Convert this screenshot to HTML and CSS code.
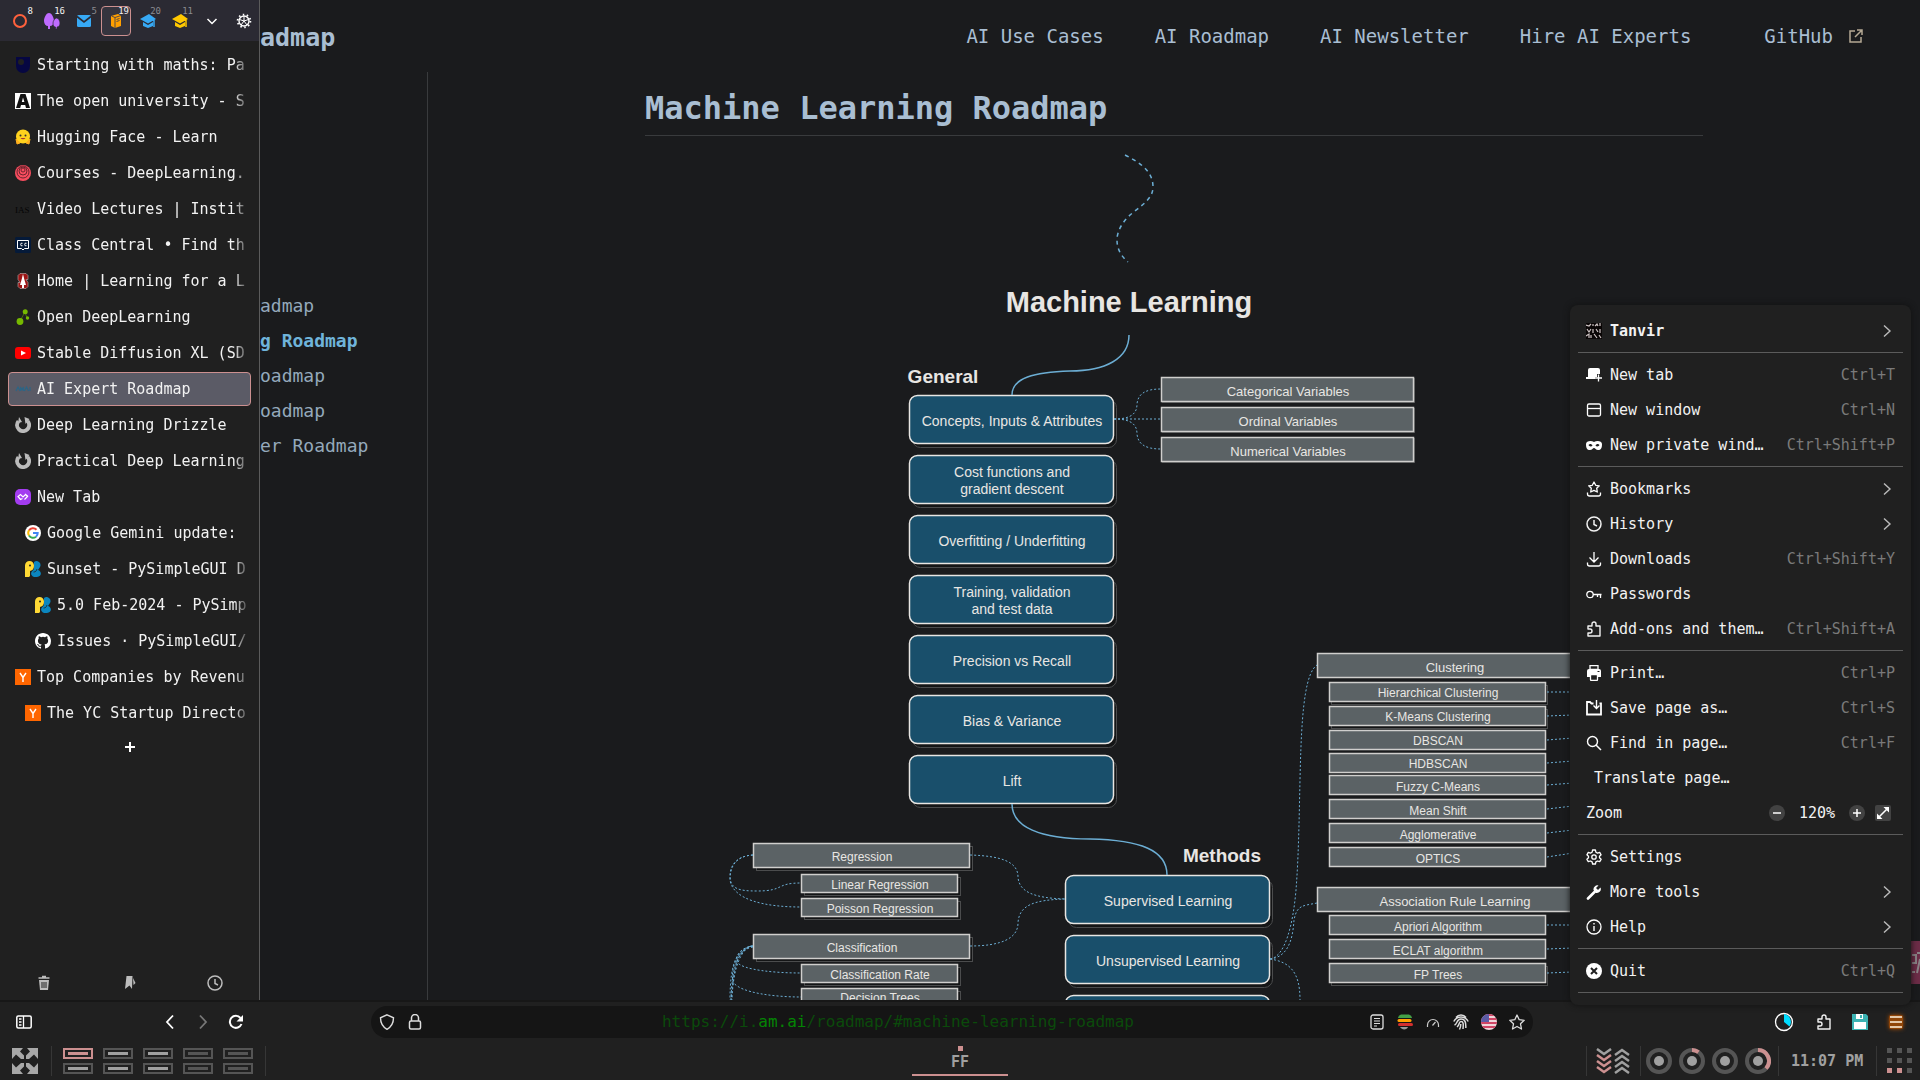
FILE: index.html
```html
<!DOCTYPE html>
<html lang="en">
<head>
<meta charset="utf-8">
<title>AI Expert Roadmap</title>
<link rel="stylesheet" href="styles.css">
</head>
<body>
<svg class="defs" aria-hidden="true">
  <symbol id="chev-r" viewBox="0 0 16 16"><path d="M5 2.500l6 5.500-6 5.500" fill="none" stroke="currentColor" stroke-width="1.400"/></symbol>
  <symbol id="loader" viewBox="0 0 16 16"><path d="M3.500 4.200A6 6 0 1 0 12.500 4" fill="none" stroke="#bbb" stroke-width="4"/><path d="M9.500 0l5 2-4 5z" fill="#bbb"/><path d="M4 0l3 5-4 1zM8 5v4" fill="#bbb"/></symbol>
  <symbol id="pysg" viewBox="0 0 16 16"><path d="M9 1a4 4 0 0 1 6 5l-2 3c4 1 4 7-1 7H9a3.500 3.500 0 0 1-2.500-5L9 8z" fill="#0b86bf"/><path d="M0 16V4.500C0 2 2 0 4.500 0S9 2 9 4.500c0 3-1 5-4 5.500v5l-1 1z" fill="#ffd935"/><circle cx="5" cy="4.500" r="1" fill="#222"/><path d="M8.500 11c2 0 3-1 3.500-3" stroke="#222" fill="none" stroke-width=".8"/></symbol>
  <symbol id="yc" viewBox="0 0 16 16"><path d="M0 0h16v16H0z" fill="#f60"/><path d="M5 4l3 4.500L11 4M8 8.500V13" fill="none" stroke="#fff" stroke-width="1.400"/></symbol>
  <symbol id="gradcap" viewBox="0 0 16 16"><path d="M0 6l9-5 7 5-8 4.500z" fill="currentColor"/><path d="M3 9l5 3 5-3v4l-5 2-5-2z" fill="currentColor"/><path d="M9 6l5 1.500V14" fill="none" stroke="currentColor" stroke-width="1.500"/></symbol>
  <symbol id="puzzle" viewBox="0 0 16 16"><path d="M2 5h4V3a2 2 0 0 1 4 0v2h4v10H2v-3h2a1.600 1.600 0 0 0 0-4H2z" fill="none" stroke="currentColor" stroke-width="1.400" stroke-linejoin="round"/></symbol>
  <symbol id="clock" viewBox="0 0 16 16"><circle cx="8" cy="8" r="7" fill="none" stroke="currentColor" stroke-width="1.500"/><path d="M8 4v4.500l3 1.500" fill="none" stroke="currentColor" stroke-width="1.500"/></symbol>
</svg>

<div class="window">
  <aside class="tabs">
    <div class="groups">
      <button class="group" aria-label="Group 1"><svg viewBox="0 0 16 16"><circle cx="8" cy="8" r="6" fill="none" stroke="#ff613d" stroke-width="2"/></svg><span>8</span></button>
      <button class="group" aria-label="Group 2"><svg viewBox="0 0 16 16"><path d="M5 0c3 0 5 5 5 8s-2 5-4 5v3H4v-3c-2 0-4-2-4-5s2-8 5-8z" fill="#bf6bff"/><path d="M12.500 5c2 0 3.500 3 3.500 5s-1 4-3 4v2h-1.500v-2c-2 0-2.500-2-2.500-4s2-5 3.500-5z" fill="#bf6bff" stroke="#2b2a33" stroke-width=".7"/></svg><span>16</span></button>
      <button class="group dim" aria-label="Group 3"><svg viewBox="0 0 16 16"><rect x="1" y="2" width="14" height="12" rx="1.500" fill="#37a9f5"/><path d="M1 3.500l7 5.500 7-5.500" fill="none" stroke="#2b2a33" stroke-width="1.600"/></svg><span>5</span></button>
      <button class="group on" aria-label="Group 4"><svg viewBox="0 0 16 16"><path d="M3 3l7-2 3 1.500V13l-6 2-4-2z" fill="#ff9f00"/><path d="M3.500 3L7 4.500V15M7 4.500l6-2M8.500 6.500l3-1M8.500 8.500l3-1" stroke="#42414d" stroke-width=".9" fill="none"/></svg><span>19</span></button>
      <button class="group dim blue" aria-label="Group 5"><svg><use href="#gradcap"/></svg><span>20</span></button>
      <button class="group dim gold" aria-label="Group 6"><svg><use href="#gradcap"/></svg><span>11</span></button>
      <button class="group" aria-label="More groups"><svg viewBox="0 0 16 16"><path d="M3.500 6L8 10.500 12.500 6" fill="none" stroke="#fff" stroke-width="1.500"/></svg></button>
      <button class="group" aria-label="Group settings"><svg viewBox="0 0 16 16"><circle cx="8" cy="8" r="5" fill="none" stroke="#fff" stroke-width="1.400"/><circle cx="8" cy="8" r="6.400" fill="none" stroke="#fff" stroke-width="1.800" stroke-dasharray="1.500 2.520"/><path d="M8 8V3M8 8l4.500-1.500M8 8l3 4M8 8l-3 4M8 8L3.500 6.500" stroke="#fff"/></svg></button>
    </div>
    <ul class="tablist">
      <li><a class="tab" href="#"><svg viewBox="0 0 16 16"><path d="M1 0h14v9a7 7 0 0 1-14 0z" fill="#060742"/><circle cx="6" cy="5" r="3" fill="#202020"/></svg><span>Starting with maths: Pa</span></a></li>
      <li><a class="tab" href="#"><svg viewBox="0 0 16 16"><path d="M0 0h16v16H0z" fill="#fff"/><path d="M5.500 1h5L15 15h-4l-.8-3H6l-.8 3H1zM8 4.500L6.800 9h2.600z" fill="#111"/></svg><span>The open university - S</span></a></li>
      <li><a class="tab" href="#"><svg viewBox="0 0 16 16"><circle cx="8" cy="7.500" r="7" fill="#ffd21e"/><path d="M1 10l4 4-3 1zM15 10l-4 4 3 1z" fill="#ffb01e" stroke="#ffb01e"/><circle cx="5.500" cy="6.500" r="1" fill="#333"/><circle cx="10.500" cy="6.500" r="1" fill="#333"/><path d="M5.500 9a3 3 0 0 0 5 0z" fill="#a33"/></svg><span>Hugging Face - Learn</span></a></li>
      <li><a class="tab" href="#"><svg viewBox="0 0 16 16"><circle cx="8" cy="8" r="8" fill="#f94d5f"/><g fill="none" stroke="#5c2029" stroke-width=".9"><circle cx="8" cy="7" r="6"/><circle cx="8" cy="6" r="4"/><circle cx="8" cy="5" r="2"/></g></svg><span>Courses - DeepLearning.</span></a></li>
      <li><a class="tab" href="#"><svg viewBox="0 0 16 16"><text x="0" y="12" class="ias">IAS</text></svg><span>Video Lectures | Instit</span></a></li>
      <li><a class="tab" href="#"><svg viewBox="0 0 16 16"><rect width="16" height="16" rx="1.500" fill="#051a39"/><path d="M2.500 3.500h11v8h-4l-1.500 1.500-1.500-1.500h-4z" fill="none" stroke="#fff"/><path d="M7.500 6.300a1.300 1.300 0 1 0 0 2.400M11.500 6.300a1.300 1.300 0 1 0 0 2.400" fill="none" stroke="#fff"/></svg><span>Class Central • Find th</span></a></li>
      <li><a class="tab" href="#"><svg viewBox="0 0 16 16"><path d="M5 .5h6l2 2v4h-2l2 3v4l-2 2H5l-2-2v-4h2l-2-3v-4z" fill="#9c1616" stroke="#ccc" stroke-width=".5"/><path d="M8 1l1.500 6 1.500 5H9v3H7v-3H5l1.500-5z" fill="#fff"/></svg><span>Home | Learning for a L</span></a></li>
      <li><a class="tab" href="#"><svg viewBox="0 0 16 16"><path d="M5 12l5-9 2 6" stroke="#537f0a" stroke-width=".8" fill="none"/><g fill="#76b900"><circle cx="5" cy="12.500" r="3.400"/><circle cx="10.200" cy="2.800" r="2.500"/><circle cx="12.500" cy="9" r="1.700"/></g></svg><span>Open DeepLearning</span></a></li>
      <li><a class="tab" href="#"><svg viewBox="0 0 16 16"><rect y="2" width="16" height="12" rx="3" fill="red"/><path d="M6 5.500l5 2.500-5 2.500z" fill="#fff"/></svg><span>Stable Diffusion XL (SD</span></a></li>
      <li><a class="tab current" href="#"><svg viewBox="0 0 16 16"><path d="M1 10l2-4 2 4M5.500 10V6l1.500 3L8.500 6v4M9.500 10l2-4 2 4M15 6v4" fill="none" stroke="#2d6585" stroke-width="1.200"/></svg><span>AI Expert Roadmap</span></a></li>
      <li><a class="tab" href="#"><svg><use href="#loader"/></svg><span>Deep Learning Drizzle</span></a></li>
      <li><a class="tab" href="#"><svg><use href="#loader"/></svg><span>Practical Deep Learning</span></a></li>
      <li><a class="tab" href="#"><svg viewBox="0 0 16 16"><rect width="16" height="16" rx="5" fill="#a33cf0"/><path d="M7.500 9.500l-2 1-2.500-3 2.500-2L8 8l2.500-2.500 2 2-3 3M10 5l3 2.500" fill="none" stroke="#fff" stroke-width="1.200"/></svg><span>New Tab</span></a></li>
      <li class="child"><a class="tab" href="#"><svg viewBox="0 0 16 16"><circle cx="8" cy="8" r="8" fill="#fff"/><g fill="none" stroke-width="2"><path d="M4 5.500A4.700 4.700 0 0 1 11.500 4.700" stroke="#ea4335"/><path d="M4 5.300a5 5 0 0 0 0 5.200" stroke="#fbbc05"/><path d="M4 10.500a4.700 4.700 0 0 0 7 1.200" stroke="#34a853"/><path d="M8 8h4.700a4.700 4.700 0 0 1-1.700 3.700" stroke="#4285f4"/></g></svg><span>Google Gemini update:</span></a></li>
      <li class="child"><a class="tab" href="#"><svg><use href="#pysg"/></svg><span>Sunset - PySimpleGUI D</span></a></li>
      <li class="grandchild"><a class="tab" href="#"><svg><use href="#pysg"/></svg><span>5.0 Feb-2024 - PySimp</span></a></li>
      <li class="grandchild"><a class="tab" href="#"><svg viewBox="0 0 16 16"><path fill="#fff" d="M8 0C3.580 0 0 3.580 0 8c0 3.540 2.290 6.530 5.470 7.590.4.070.55-.17.55-.38v-1.490c-2.010.37-2.530-.49-2.690-.94-.09-.23-.48-.94-.82-1.130-.28-.15-.68-.52-.01-.53.63-.01 1.080.58 1.230.82.72 1.210 1.870.87 2.330.66.07-.52.28-.87.51-1.070-1.780-.2-3.640-.89-3.640-3.950 0-.87.31-1.590.82-2.150-.08-.2-.36-1.020.08-2.120 0 0 .67-.21 2.200.82a7.600 7.600 0 0 1 4 0c1.530-1.040 2.200-.82 2.200-.82.44 1.100.16 1.920.08 2.120.51.56.82 1.270.82 2.150 0 3.070-1.870 3.750-3.650 3.950.29.25.54.73.54 1.480v2.200c0 .21.15.46.55.38A8 8 0 0 0 16 8c0-4.420-3.580-8-8-8z"/></svg><span>Issues · PySimpleGUI/</span></a></li>
      <li><a class="tab" href="#"><svg><use href="#yc"/></svg><span>Top Companies by Revenu</span></a></li>
      <li class="child"><a class="tab" href="#"><svg><use href="#yc"/></svg><span>The YC Startup Directo</span></a></li>
    </ul>
    <button class="addtab" aria-label="New tab"><svg viewBox="0 0 16 16"><path d="M8 3v10M3 8h10" stroke="#fff" stroke-width="2"/></svg></button>
    <div class="tabfoot">
      <button aria-label="Trash"><svg viewBox="0 0 16 16"><path d="M2.500 3h11M6 1.500h4" stroke="currentColor" stroke-width="1.500"/><path d="M3 5h10l-1 10H4z" fill="currentColor"/><path d="M6 7v6M8 7v6M10 7v6" stroke="#202020"/></svg></button>
      <button aria-label="Bookmarks"><svg viewBox="0 0 16 16"><path d="M5.500 1h6L11 14l-2.500-3.500L4 14z" fill="currentColor"/><path d="M12 3l2.500 5-2 2z" fill="currentColor"/></svg></button>
      <button aria-label="History"><svg><use href="#clock"/></svg></button>
    </div>
  </aside>

  <div class="site">
    <header class="sitehead">
      <a class="brand" href="#">admap</a>
      <nav class="sitenav">
        <a href="#">AI Use Cases</a>
        <a href="#">AI Roadmap</a>
        <a href="#">AI Newsletter</a>
        <a href="#">Hire AI Experts</a>
        <a class="github" href="#">GitHub <svg viewBox="0 0 14 14"><path d="M6 2H1v11h11V8" fill="none" stroke="#b5a994" stroke-width="1.500"/><path d="M8 1h5v5M13 1L6 8" fill="none" stroke="#b5a994" stroke-width="1.500"/></svg></a>
      </nav>
    </header>
    <div class="sitebody">
      <nav class="toc">
        <a href="#">admap</a>
        <a class="here" href="#">g Roadmap</a>
        <a href="#">oadmap</a>
        <a href="#">oadmap</a>
        <a href="#">er Roadmap</a>
      </nav>
      <main class="article">
        <h1>Machine Learning Roadmap</h1>
        <svg class="map" width="1058" height="864" viewBox="645 136 1058 864">
          <defs>
            <g id="topic"><rect class="sh" x="3" y="4" width="204" height="48" rx="8"/><rect class="nd" width="204" height="48" rx="8"/></g>
            <g id="var"><rect class="sh" x="1" y="1" width="252" height="24"/><rect class="gr" width="252" height="24"/></g>
            <g id="fam"><rect class="sh" x="3" y="3" width="216" height="24"/><rect class="gr" width="216" height="24"/></g>
            <g id="leaf"><rect class="sh" x="3" y="3" width="156" height="18"/><rect class="gr" width="156" height="18"/></g>
            <g id="algo"><rect class="gr" width="216" height="19"/></g>
            <g id="algosh"><rect class="sh" x="2" y="3" width="216" height="19"/><rect class="gr" width="216" height="19"/></g>
          </defs>
          <g>
            <use href="#topic" x="909.500" y="395.500"/><use href="#topic" x="909.500" y="455.500"/><use href="#topic" x="909.500" y="515.500"/><use href="#topic" x="909.500" y="575.500"/><use href="#topic" x="909.500" y="635.500"/><use href="#topic" x="909.500" y="695.500"/><use href="#topic" x="909.500" y="755.500"/>
            <use href="#topic" x="1065.500" y="875.500"/><use href="#topic" x="1065.500" y="935.500"/><use href="#topic" x="1065.500" y="995.500"/>
            <use href="#var" x="1161.500" y="377.500"/><use href="#var" x="1161.500" y="407.500"/><use href="#var" x="1161.500" y="437.500"/>
            <use href="#fam" x="753.500" y="843.500"/><use href="#fam" x="753.500" y="934.500"/>
            <use href="#leaf" x="801.500" y="874.500"/><use href="#leaf" x="801.500" y="898.500"/><use href="#leaf" x="801.500" y="964.500"/><use href="#leaf" x="801.500" y="988.500"/>
            <rect class="gr" x="1317.500" y="653.500" width="276" height="24"/><rect class="gr" x="1317.500" y="887.500" width="276" height="24"/>
            <use href="#algosh" x="1329.500" y="682.500"/><use href="#algosh" x="1329.500" y="706.500"/><use href="#algo" x="1329.500" y="730.500"/><use href="#algo" x="1329.500" y="753.500"/><use href="#algo" x="1329.500" y="775.500"/><use href="#algo" x="1329.500" y="799.500"/><use href="#algo" x="1329.500" y="823.500"/><use href="#algo" x="1329.500" y="847.500"/>
            <use href="#algo" x="1329.500" y="915.500"/><use href="#algo" x="1329.500" y="939.500"/><use href="#algosh" x="1329.500" y="963.500"/>
          </g>
          <g class="line">
            <path class="dash" d="M1125 155C1145 165 1153 174 1153 187C1153 197 1145 203 1135 211C1124 219 1117 230 1117 240C1117 249 1121 256 1128 262"/>
            <path d="M1129 335C1129 359 1105 371 1070 371C1034 372 1012 378 1012 395"/>
            <path d="M1012 804C1012 827 1040 839 1090 839C1140 840 1167 850 1167 875"/>
          </g>
          <g class="line dot">
            <path d="M1114 419H1161M1114 419C1132 419 1137 413 1137 404C1138 394 1145 389 1161 389M1114 419C1132 419 1137 425 1137 434C1138 444 1145 449 1161 449"/>
            <path d="M753 855C736 856 730 866 730 876C730 889 739 891 757 891C785 891 775 883 801 883"/>
            <path d="M753 855C736 856 730 866 730 880C733 900 765 907 801 907"/>
            <path d="M970 855C1002 856 1018 862 1018 877C1019 892 1034 898 1065 899"/>
            <path d="M970 946C1002 946 1018 938 1018 923C1019 905 1034 900 1065 899"/>
            <path d="M753 946C742 947 735 955 737 962C742 970 775 973 801 973M753 946C740 948 730 965 733 982C740 993 775 997 801 997"/>
            <path d="M753 946C738 948 730 960 730 1000M753 947C740 949 732 962 731 1000M752 946C742 948 733 966 732 1000M751 946C738 950 734 964 731 1002"/>
            <path d="M1270 959C1285 957 1293 925 1296 890C1303 800 1295 680 1317 665"/>
            <path d="M1270 959C1290 957 1293 935 1294 920C1297 905 1302 906 1317 903"/>
            <path d="M1270 959C1290 962 1300 972 1300 1000"/>
            <path d="M1547 692h26M1547 716l26-1M1547 740l26-2M1547 763l26-2M1547 785l26-2M1547 809l26-3M1547 833l26-3M1547 857l26-4M1547 925h26M1547 949l26-1M1547 973l26-1"/>
          </g>
          <text class="t-title" x="1129" y="312">Machine Learning</text>
          <text class="t-head" x="943" y="383">General</text>
          <text class="t-head" x="1222" y="862">Methods</text>
          <g class="t-topic">
            <text x="1012" y="426">Concepts, Inputs &amp; Attributes</text>
            <text x="1012" y="477">Cost functions and</text><text x="1012" y="494">gradient descent</text>
            <text x="1012" y="546">Overfitting / Underfitting</text>
            <text x="1012" y="597">Training, validation</text><text x="1012" y="614">and test data</text>
            <text x="1012" y="666">Precision vs Recall</text>
            <text x="1012" y="726">Bias &amp; Variance</text>
            <text x="1012" y="786">Lift</text>
            <text x="1168" y="906">Supervised Learning</text>
            <text x="1168" y="966">Unsupervised Learning</text>
          </g>
          <g class="t-var">
            <text x="1288" y="396">Categorical Variables</text><text x="1288" y="426">Ordinal Variables</text><text x="1288" y="456">Numerical Variables</text>
            <text x="1455" y="672">Clustering</text><text x="1455" y="906">Association Rule Learning</text>
          </g>
          <g class="t-leaf">
            <text x="862" y="861">Regression</text><text x="862" y="952">Classification</text>
            <text x="880" y="889">Linear Regression</text><text x="880" y="913">Poisson Regression</text><text x="880" y="979">Classification Rate</text><text x="880" y="1002">Decision Trees</text>
            <text x="1438" y="697">Hierarchical Clustering</text><text x="1438" y="721">K-Means Clustering</text><text x="1438" y="745">DBSCAN</text><text x="1438" y="768">HDBSCAN</text><text x="1438" y="791">Fuzzy C-Means</text><text x="1438" y="815">Mean Shift</text><text x="1438" y="839">Agglomerative</text><text x="1438" y="863">OPTICS</text>
            <text x="1438" y="931">Apriori Algorithm</text><text x="1438" y="955">ECLAT algorithm</text><text x="1438" y="979">FP Trees</text>
          </g>
        </svg>
      </main>
    </div>
    <button class="chat" aria-label="Translate widget"><svg viewBox="0 0 8 43"><path d="M0 14h4v8H0M0 31h3M8 12H5M8 18l-3 14" fill="none" stroke="#8a8286" stroke-width="2"/></svg></button>
  </div>
</div>

<div class="toolbar">
  <div class="navleft">
    <button class="tb" aria-label="Toggle sidebar"><svg viewBox="0 0 16 16"><rect x=".8" y="2" width="14.400" height="12" rx="1.500" fill="none" stroke="#fff" stroke-width="1.500"/><path d="M7.500 2v12M3 5h2.500M3 8h2.500M3 11h2.500" stroke="#fff" stroke-width="1.300"/></svg></button>
    <div class="history">
      <button class="tb" aria-label="Back"><svg viewBox="0 0 16 16"><path d="M11 1.500L5 8l6 6.500" fill="none" stroke="#fff" stroke-width="1.800"/></svg></button>
      <button class="tb" aria-label="Forward"><svg viewBox="0 0 16 16"><path d="M5 1.500L11 8l-6 6.500" fill="none" stroke="#777" stroke-width="1.800"/></svg></button>
      <button class="tb" aria-label="Reload"><svg viewBox="0 0 16 16"><path d="M12.500 4A6 6 0 1 0 13.500 10" fill="none" stroke="#fff" stroke-width="2"/><path d="M15 1v6.500H8.500z" fill="#fff"/></svg></button>
    </div>
  </div>
  <div class="urlbar">
    <svg viewBox="0 0 16 16"><path d="M8 .8l6.500 3c0 5-2 9-6.500 11.500C3.500 12.800 1.500 8.800 1.500 3.800z" fill="none" stroke="#ddd" stroke-width="1.400"/></svg>
    <svg viewBox="0 0 16 16"><rect x="2.500" y="7" width="11" height="8" rx="1.500" fill="none" stroke="#ddd" stroke-width="1.500"/><path d="M4.500 7V4a3.500 3.500 0 0 1 7 0v3" fill="none" stroke="#ddd" stroke-width="1.500"/></svg>
    <a class="url" href="#">https://i.<b>am.ai</b>/roadmap/#machine-learning-roadmap</a>
    <svg viewBox="0 0 16 16"><rect x="2" y="1" width="12" height="14" rx="2" fill="none" stroke="#ddd" stroke-width="1.300"/><path d="M5 4.500h6M5 7h6M5 9.500h6M5 12h3" stroke="#ddd" stroke-width="1.200"/></svg>
    <svg viewBox="0 0 16 16"><path d="M4 .5h8a4 4 0 0 1 3 3.500H1A4 4 0 0 1 4 .5z" fill="#43a047"/><rect x=".5" y="5" width="14" height="3" rx="1.500" fill="#ffa000"/><rect x="1" y="9" width="15" height="3" rx="1.500" fill="#d32f2f"/><path d="M3 13h8c-1 3-6 3.500-8 0z" fill="#999"/></svg>
    <svg viewBox="0 0 16 16"><path d="M2.500 13V11a5.500 5.500 0 0 1 11 0V13M7.500 11.500l3-3.500" fill="none" stroke="#ccc" stroke-width="1.200"/></svg>
    <svg viewBox="0 0 16 16"><path d="M3 3.500c2.500-3.500 7.500-3.500 10 0M.8 7.500C4 1.500 12 1.500 15.200 7.500M1.500 11C4.500 10 3.500 5 8 5s5 4 4.800 9M4 13c3-2 1.500-5.500 4-5.500S10.500 10 10 15M7.800 10c0 2-.3 3.500-1.300 5.500" fill="none" stroke="#ddd" stroke-width="1.500"/></svg>
    <svg viewBox="0 0 16 16"><defs><clipPath id="disc"><circle cx="8" cy="8" r="8"/></clipPath></defs><g clip-path="url(#disc)"><path d="M0 0h16v16H0z" fill="#f0d5da"/><path d="M0 1h16M0 5h16M0 9h16M0 13h16" stroke="#cf4565" stroke-width="2"/><path d="M0 0h8v8H0z" fill="#5b5ba5"/></g></svg>
    <svg viewBox="0 0 16 16"><path d="M8 1l2.200 4.700 5 .6-3.700 3.500 1 5.200L8 12.500 3.500 15l1-5.200L.8 6.300l5-.6z" fill="none" stroke="#ddd" stroke-width="1.300" stroke-linejoin="round"/></svg>
  </div>
  <div class="ext">
    <button class="tb meter" aria-label="Usage"><svg viewBox="0 0 20 20"><circle cx="10" cy="10" r="8.500" fill="none" stroke="#fff" stroke-width="1.300"/><path d="M10 2v8l5.500 4.500A8 8 0 0 0 10 2z" fill="#00dcff"/></svg></button>
    <button class="tb" aria-label="Extensions"><svg><use href="#puzzle"/></svg></button>
    <button class="tb" aria-label="Save session"><svg viewBox="0 0 16 16"><path d="M0 0h14l2 2v14H0z" fill="#3bb3b3"/><path d="M2 8h12v7H2zM4 0h7v5H4z" fill="#fff"/><path d="M8 1h2v3H8z" fill="#3bb3b3"/></svg></button>
    <button class="tb menubtn" aria-label="Menu"><svg viewBox="0 0 14 14"><path d="M1 2h12M1 7h12M1 12h12" stroke="#fff3e0" stroke-width="1.500"/></svg></button>
  </div>
</div>

<footer class="taskbar">
  <div class="tl">
    <button class="cell launch" aria-label="Overview"><svg viewBox="0 0 26 26"><g id="arr"><path d="M0 0h11L8 3.500l4 4V11H9L4 6.500 0 11z" fill="#a8a8a8"/></g><use href="#arr" transform="translate(26 0) scale(-1 1)"/><use href="#arr" transform="translate(0 26) scale(1 -1)"/><use href="#arr" transform="translate(26 26) scale(-1 -1)"/></svg></button>
    <div class="cell spaces">
      <i class="sp sel"></i><i class="sp used"></i><i class="sp used"></i><i class="sp"></i><i class="sp"></i>
      <i class="sp used"></i><i class="sp used"></i><i class="sp used"></i><i class="sp"></i><i class="sp"></i>
    </div>
  </div>
  <button class="task"><i></i>FF</button>
  <div class="tr">
    <div class="cell net"><svg viewBox="0 0 34 26"><g fill="none" stroke-width="2.500"><path d="M1 1l7 5 7-5" stroke="#a0a0a0"/><path d="M1 7l7 5 7-5M1 13l7 5 7-5M1 19l7 5 7-5" stroke="#cc9090"/><path d="M19 7l7-5 7 5M19 13l7-5 7 5M19 19l7-5 7 5M19 25l7-5 7 5" stroke="#a0a0a0"/></g></svg></div>
    <div class="cell rings">
      <svg viewBox="0 0 26 26"><circle class="ring" cx="13" cy="13" r="11"/><circle class="core" cx="13" cy="13" r="5"/></svg>
      <svg viewBox="0 0 26 26"><circle class="ring" cx="13" cy="13" r="11"/><path class="arc" d="M13 2a11 11 0 0 1 6.500 2.200"/><circle class="core" cx="13" cy="13" r="5"/></svg>
      <svg viewBox="0 0 26 26"><circle class="ring" cx="13" cy="13" r="11"/><circle class="core" cx="13" cy="13" r="5"/></svg>
      <svg viewBox="0 0 26 26"><circle class="ring" cx="13" cy="13" r="11"/><path class="arc" d="M13 2a11 11 0 0 1 8 18.500"/><circle class="core" cx="13" cy="13" r="5"/></svg>
    </div>
    <div class="cell time">11:07 PM</div>
    <div class="cell dots"><i></i><i></i><i></i><i></i><i></i><i></i><i class="p"></i><i class="p"></i><i></i></div>
  </div>
</footer>

<div class="menu" role="menu">
  <button class="mi user"><svg viewBox="0 0 16 16"><path d="M0 0h16v16H0z" fill="#0a0606"/><path d="M0 2l3 1 2-2M7 1v2M9 3l2-2 1 2M14 0v3M1 6l2 3 2-3M7 6v4M10 6l2 3M14 6v4M0 13l3-2v4M5 12v3M8 11l3 4M13 12l2 3" stroke="#cfc5c5" fill="none" stroke-width="1.200"/></svg><span>Tanvir</span><svg class="go"><use href="#chev-r"/></svg></button>
  <hr>
  <button class="mi"><svg viewBox="0 0 16 16"><path d="M2 3a2 2 0 0 1 2-2h8a2 2 0 0 1 2 2v4h-3v3H9v2H0v-2h2z" fill="#fff"/><path d="M12.500 7.500v7M9 11h7" stroke="#fff" stroke-width="1.300"/></svg><span>New tab</span><kbd>Ctrl+T</kbd></button>
  <button class="mi"><svg viewBox="0 0 16 16"><rect x="1.500" y="2" width="13" height="12" rx="1.500" fill="none" stroke="#fff" stroke-width="1.300"/><path d="M1.500 6.500h13" stroke="#fff" stroke-width="1.300"/></svg><span>New window</span><kbd>Ctrl+N</kbd></button>
  <button class="mi"><svg viewBox="0 0 16 16"><path d="M0 7c0-3 5-4 8-2 3-2 8-1 8 2 0 4-1 6-4 6-2 0-3-2-4-2s-2 2-4 2c-3 0-4-2-4-6z" fill="#fff"/><path d="M2.500 8c1-1.500 3-1.500 4 .5-1 1.500-3.500 1-4-.5zM13.500 8c-1-1.500-3-1.500-4 .5 1 1.500 3.500 1 4-.5z" fill="#202020"/></svg><span>New private wind…</span><kbd>Ctrl+Shift+P</kbd></button>
  <hr>
  <button class="mi"><svg viewBox="0 0 16 16"><path d="M8 1l1.700 3.300 3.600.5-2.600 2.500.6 3.700L8 9.300 4.700 11l.6-3.700L2.700 4.800l3.600-.5z" fill="none" stroke="#fff" stroke-width="1.300" stroke-linejoin="round"/><path d="M1.500 11.500V13a2 2 0 0 0 2 2h9a2 2 0 0 0 2-2v-1.500" fill="none" stroke="#fff" stroke-width="1.300"/></svg><span>Bookmarks</span><svg class="go"><use href="#chev-r"/></svg></button>
  <button class="mi"><svg><use href="#clock"/></svg><span>History</span><svg class="go"><use href="#chev-r"/></svg></button>
  <button class="mi"><svg viewBox="0 0 16 16"><path d="M8 1v9.500M3.500 6.500L8 11l4.500-4.500M1.500 11.500V13a2 2 0 0 0 2 2h9a2 2 0 0 0 2-2v-1.500" fill="none" stroke="#fff" stroke-width="1.300"/></svg><span>Downloads</span><kbd>Ctrl+Shift+Y</kbd></button>
  <button class="mi"><svg viewBox="0 0 16 16"><circle cx="4" cy="8.500" r="3.200" fill="none" stroke="#fff" stroke-width="1.300"/><path d="M7 8.500h8.500M14.500 8.500v3.500M11.500 8.500V11" fill="none" stroke="#fff" stroke-width="1.300"/></svg><span>Passwords</span></button>
  <button class="mi"><svg><use href="#puzzle"/></svg><span>Add-ons and them…</span><kbd>Ctrl+Shift+A</kbd></button>
  <hr>
  <button class="mi"><svg viewBox="0 0 16 16"><path d="M4 .5h8v4H4z" fill="none" stroke="#fff" stroke-width="1.300"/><path d="M1 6a2 2 0 0 1 2-2h10a2 2 0 0 1 2 2v6H1z" fill="#fff"/><rect x="4.500" y="9.500" width="7" height="6" rx="1" fill="#202020" stroke="#fff" stroke-width="1.300"/><path d="M11.500 6.500h2" stroke="#202020"/></svg><span>Print…</span><kbd>Ctrl+P</kbd></button>
  <button class="mi"><svg viewBox="0 0 16 16"><path d="M7.500 3.500h-2L4 2H1v12.500h14V3.500h-1.500" fill="none" stroke="#fff" stroke-width="1.800"/><path d="M10.500 0v8M7.500 5.500l3 3 3-3" fill="none" stroke="#fff" stroke-width="1.400"/></svg><span>Save page as…</span><kbd>Ctrl+S</kbd></button>
  <button class="mi"><svg viewBox="0 0 16 16"><circle cx="6.500" cy="6.500" r="5" fill="none" stroke="#fff" stroke-width="1.400"/><path d="M10 10l5 5" stroke="#fff" stroke-width="1.500"/></svg><span>Find in page…</span><kbd>Ctrl+F</kbd></button>
  <button class="mi plain"><span>Translate page…</span></button>
  <div class="mi zoom"><span>Zoom</span>
    <button class="round" aria-label="Zoom out"><svg viewBox="0 0 16 16"><path d="M4 8h8" stroke="#fff" stroke-width="1.500"/></svg></button>
    <output>120%</output>
    <button class="round" aria-label="Zoom in"><svg viewBox="0 0 16 16"><path d="M4 8h8M8 4v8" stroke="#fff" stroke-width="1.500"/></svg></button>
    <button class="full" aria-label="Full screen"><svg viewBox="0 0 16 16"><path d="M4 12l8-8" stroke="#fff" stroke-width="1.600"/><path d="M8.500 2H14v5.500zM7.500 14H2V8.500z" fill="#fff"/></svg></button>
  </div>
  <hr>
  <button class="mi"><svg viewBox="0 0 16 16"><path d="M6.600 1h2.800l.5 2.200 1.600.9 2.200-.7 1.400 2.400L13.500 7.300v1.500l1.600 1.500-1.400 2.400-2.200-.7-1.600.9L9.400 15H6.600l-.5-2.100-1.600-.9-2.200.7L.9 10.300l1.600-1.500V7.300L.9 5.800l1.400-2.400 2.200.7 1.600-.9z" fill="none" stroke="#fff" stroke-width="1.300" stroke-linejoin="round"/><circle cx="8" cy="8" r="2.200" fill="none" stroke="#fff" stroke-width="1.300"/></svg><span>Settings</span></button>
  <button class="mi"><svg viewBox="0 0 16 16"><path d="M2 14.500l8-8" stroke="#fff" stroke-width="2.600" stroke-linecap="round"/><path d="M14.500 3.500L12 6l-2-2 2.500-2.500A4 4 0 0 0 7.500 6l2.500 3a4 4 0 0 0 4.500-5.500z" fill="#fff"/></svg><span>More tools</span><svg class="go"><use href="#chev-r"/></svg></button>
  <button class="mi"><svg viewBox="0 0 16 16"><circle cx="8" cy="8" r="7" fill="none" stroke="#fff" stroke-width="1.300"/><path d="M8 7v5M8 4v1.500" stroke="#fff" stroke-width="1.400"/></svg><span>Help</span><svg class="go"><use href="#chev-r"/></svg></button>
  <hr>
  <button class="mi"><svg viewBox="0 0 16 16"><circle cx="8" cy="8" r="8" fill="#fff"/><path d="M5 5l6 6M11 5l-6 6" stroke="#202020" stroke-width="2"/></svg><span>Quit</span><kbd>Ctrl+Q</kbd></button>
  <hr>
</div>
</body>
</html>
```
FILE: styles.css
```css
* { box-sizing: border-box; }
body {
  margin: 0;
  height: 100vh;
  display: flex;
  flex-direction: column;
  overflow: hidden;
  background: #202020;
  color: #f2f2f2;
  font: 15px/20px "DejaVu Sans Mono", "Liberation Mono", monospace;
}
button { padding: 0; border: 0; background: none; color: inherit; font: inherit; }
a { color: inherit; text-decoration: none; }
svg { flex: none; }
.defs { position: absolute; width: 0; height: 0; }

.window { flex: 1; min-height: 0; display: flex; background: #1a1b1d; overflow: hidden; }

/* vertical tab panel */
.tabs { width: 260px; flex: none; display: flex; flex-direction: column; background: #202020; border-right: 1px solid #5b5b5b; }
.groups { display: flex; height: 41px; padding: 6px 0 5px 5px; gap: 2px; background: #2b2a33; flex: none; }
.group { position: relative; width: 30px; display: grid; place-items: center; border: 1px solid transparent; border-radius: 4px; }
.group svg { width: 16px; height: 16px; }
.group span { position: absolute; top: 0; right: 1px; font-size: 9px; line-height: 9px; color: #f2f2f2; }
.group.dim span { color: #8a8a90; }
.group.on { background: #35343e; border-color: #cc9090; }
.blue { color: #37a9f5; }
.gold { color: #ffc800; }
.tablist { list-style: none; margin: 7px 8px 0; padding: 0; display: flex; flex-direction: column; gap: 2px; }
.tab { display: flex; align-items: center; gap: 6px; height: 34px; padding: 0 0 0 6px; border: 1px solid transparent; border-radius: 4px; }
.tab svg { width: 16px; height: 16px; }
.tab span { flex: 1; white-space: nowrap; -webkit-mask-image: linear-gradient(to left, transparent, #000 16px); mask-image: linear-gradient(to left, transparent, #000 16px); }
.current { background: #5b5b66; border-color: #cc9090; }
.child .tab { padding-left: 16px; }
.grandchild .tab { padding-left: 26px; }
.ias { font: 9px "Liberation Serif", serif; fill: #050505; }
.addtab { height: 34px; display: grid; place-items: center; }
.addtab svg { width: 16px; height: 16px; }
.tabfoot { margin-top: auto; height: 34px; padding: 0 1px; display: grid; grid-template-columns: repeat(3, 1fr); color: #bdbdbd; }
.tabfoot button { display: grid; place-items: center; }
.tabfoot svg { width: 16px; height: 16px; }

/* web page */
.site { position: relative; flex: 1; min-width: 0; display: flex; flex-direction: column; color: #a9bed2; overflow: hidden; }
.sitehead { height: 72px; flex: none; display: flex; justify-content: space-between; align-items: center; padding-right: 57px; }
.brand { padding-top: 4px; font-size: 25px; line-height: 32px; font-weight: bold; }
.sitenav { display: flex; gap: 51px; font-size: 19px; line-height: 24px; }
.github { margin-left: 22px; display: flex; align-items: center; gap: 16px; }
.github svg { width: 14px; height: 14px; }
.sitebody { flex: 1; min-height: 0; display: flex; }
.toc { width: 168px; flex: none; padding-top: 216px; border-right: 1px solid #393b3d; font-size: 18px; line-height: 35px; }
.toc a { display: block; color: #94a9bb; }
.toc .here { color: #6fb4da; font-weight: bold; }
.article { width: 100%; max-width: 1058px; margin: 0 auto; padding-top: 16px; }
h1 { margin: 0; padding-bottom: 7px; border-bottom: 1px solid #393b3d; font-size: 32px; line-height: 40px; }
.map { display: block; font-family: "Liberation Sans", Arial, sans-serif; fill: #e8e6e3; text-anchor: middle; }
.nd { fill: #194f6b; stroke: #e8e6e3; stroke-width: 1.5px; }
.gr { fill: #5b6265; stroke: #d0cfcd; stroke-width: 1.5px; }
.sh { fill: #141516; stroke: #4b4c4d; }
.line { fill: none; stroke: #6caed4; stroke-width: 1.5px; }
.dash { stroke-dasharray: 4 4; }
.dot { stroke-width: 1px; stroke-dasharray: 2 2; }
.t-title { font-size: 29px; font-weight: bold; }
.t-head { font-size: 19px; font-weight: bold; }
.t-topic { font-size: 14px; }
.t-var { font-size: 13px; }
.t-leaf { font-size: 12px; }
.chat { position: absolute; right: 0; bottom: 16px; width: 24px; height: 43px; background: #6c2c47; display: flex; justify-content: flex-end; }
.chat svg { width: 8px; height: 43px; }

/* browser toolbar */
.toolbar { flex: none; height: 41px; border-top: 2px solid #171717; padding: 4px 0 3px; display: flex; }
.navleft { width: 371px; display: flex; align-items: center; padding-left: 14px; gap: 126px; }
.history { display: flex; gap: 13px; }
.tb { width: 20px; height: 20px; display: grid; place-items: center; }
.tb svg { width: 16px; height: 16px; }
.urlbar { flex: 1; display: flex; align-items: center; gap: 12px; padding: 0 8px; border-radius: 16px; background: #151515; }
.urlbar svg { width: 16px; height: 16px; }
.url { flex: 1; text-align: center; font-size: 16px; color: #0b4a0b; white-space: nowrap; padding-left: 4px; }
.url b { font-weight: normal; color: #048404; }
.ext { width: 387px; display: flex; align-items: center; justify-content: flex-end; gap: 16px; padding-right: 14px; }
.meter { margin-right: 4px; }
.tb.meter svg { width: 20px; height: 20px; }
.tb.menubtn svg { background: #8f4508; box-shadow: 0 0 4px #a04c08; border-radius: 2px; width: 14px; height: 14px; }

/* desktop panel */
.taskbar { flex: none; height: 39px; display: grid; grid-template-columns: 1fr auto 1fr; align-items: center; }
.tl, .tr { display: flex; }
.tr { justify-content: flex-end; }
.cell { height: 30px; display: flex; align-items: center; }
.tl .cell { border-right: 1px solid #363636; }
.tr .cell { border-left: 1px solid #363636; }
.launch { width: 52px; padding-left: 12px; }
.launch svg { width: 26px; height: 26px; }
.spaces { display: grid; grid-template-columns: repeat(5, 30px); gap: 4px 10px; padding: 0 12px 0 11px; align-content: center; }
.sp { height: 11px; border: 2px solid #555; padding: 2px 3px; background: #555 content-box; }
.used { background-color: #a0a0a0; }
.sel { border-color: #cc9090; background-color: #cc9090; }
.task { width: 96px; height: 30px; border-bottom: 2px solid #cc9090; color: #a0a0a0; font-weight: bold; display: flex; flex-direction: column; align-items: center; line-height: 22px; }
.task i { width: 5px; height: 5px; flex: none; background: #cc9090; }
.net { width: 54px; padding-left: 9px; }
.net svg { width: 34px; height: 26px; }
.rings { width: 138px; gap: 7px; padding-left: 5px; }
.rings svg { width: 26px; height: 26px; }
.ring { fill: none; stroke: #555; stroke-width: 4px; }
.arc { fill: none; stroke: #cc9090; stroke-width: 4px; }
.core { fill: #a0a0a0; }
.time { width: 98px; padding-left: 12px; color: #a0a0a0; font-weight: bold; }
.dots { width: 44px; display: grid; grid-template-columns: repeat(3, 5px); gap: 5px; align-content: center; padding-left: 10px; }
.dots i { height: 5px; background: #555; }
.dots .p { background: #cc9090; }

/* application menu */
.menu { position: absolute; right: 9px; bottom: 75px; width: 341px; padding: 8px; background: #202020; border-radius: 8px; box-shadow: 0 0 6px #111; }
.menu hr { margin: 4px 0; border: 0; height: 1px; background: #5b5b5b; }
.mi { width: 100%; height: 35px; display: flex; align-items: center; gap: 8px; padding: 0 8px; text-align: left; }
.mi svg { width: 16px; height: 16px; }
.mi span { flex: 1; white-space: nowrap; }
.mi kbd { font: inherit; color: #7a7a7a; }
.mi .go { color: #bbb; }
.user { font-weight: bold; }
.plain { padding-left: 16px; }
.zoom { padding-right: 12px; gap: 10px; }
.round, .full { width: 16px; height: 16px; background: #424242; display: grid; border-radius: 50%; }
.full { border-radius: 2px; }
.zoom output { padding: 0 4px; }
```
